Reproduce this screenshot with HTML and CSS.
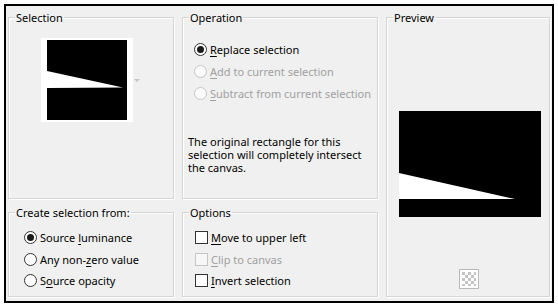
FILE: index.html
```html
<!DOCTYPE html>
<html lang="en">
<head>
<meta charset="utf-8">
<title>Load Selection</title>
<link rel="stylesheet" href="styles.css">
</head>
<body>
<div class="frame">
  <fieldset class="group g-selection">
    <legend>Selection</legend>
    <div class="thumb-row">
      <svg class="thumb" width="92" height="84" viewBox="0 0 92 84">
        <rect x="0" y="0" width="92" height="84" fill="#fff"/>
        <rect x="6" y="2" width="80" height="80" fill="#000"/>
        <polygon points="6,33 82,49.5 6,50" fill="#fff"/>
      </svg>
      <span class="drop-arrow"></span>
    </div>
  </fieldset>

  <fieldset class="group g-operation">
    <legend>Operation</legend>
    <div class="choices">
      <div class="choice"><span class="radio checked"></span><span class="lbl"><u>R</u>eplace selection</span></div>
      <div class="choice disabled"><span class="radio"></span><span class="lbl"><u>A</u>dd to current selection</span></div>
      <div class="choice disabled"><span class="radio"></span><span class="lbl"><u>S</u>ubtract from current selection</span></div>
    </div>
    <p class="note">The original rectangle for this<br>selection will completely intersect<br>the canvas.</p>
  </fieldset>

  <fieldset class="group g-preview">
    <legend>Preview</legend>
    <svg class="preview" width="142" height="106" viewBox="0 0 142 106">
      <rect x="0" y="0" width="142" height="106" fill="#000"/>
      <polygon points="0,62 116,88 0,88" fill="#fff"/>
    </svg>
    <svg class="checker" width="20" height="20" viewBox="0 0 20 20">
      <rect x="0.5" y="0.5" width="19" height="19" fill="#fff" stroke="#b9b9b9"/>
      <rect x="3" y="3" width="3" height="3" fill="#c4c4c4"/>
      <rect x="9" y="3" width="3" height="3" fill="#c4c4c4"/>
      <rect x="15" y="3" width="2" height="3" fill="#c4c4c4"/>
      <rect x="6" y="6" width="3" height="3" fill="#c4c4c4"/>
      <rect x="12" y="6" width="3" height="3" fill="#c4c4c4"/>
      <rect x="3" y="9" width="3" height="3" fill="#c4c4c4"/>
      <rect x="9" y="9" width="3" height="3" fill="#c4c4c4"/>
      <rect x="15" y="9" width="2" height="3" fill="#c4c4c4"/>
      <rect x="6" y="12" width="3" height="3" fill="#c4c4c4"/>
      <rect x="12" y="12" width="3" height="3" fill="#c4c4c4"/>
      <rect x="3" y="15" width="3" height="2" fill="#c4c4c4"/>
      <rect x="9" y="15" width="3" height="2" fill="#c4c4c4"/>
      <rect x="15" y="15" width="2" height="2" fill="#c4c4c4"/>
    </svg>
  </fieldset>

  <fieldset class="group g-source">
    <legend>Create selection from:</legend>
    <div class="choices">
      <div class="choice"><span class="radio checked"></span><span class="lbl">Source <u>l</u>uminance</span></div>
      <div class="choice"><span class="radio"></span><span class="lbl">Any non-<u>z</u>ero value</span></div>
      <div class="choice"><span class="radio"></span><span class="lbl">S<u>o</u>urce opacity</span></div>
    </div>
  </fieldset>

  <fieldset class="group g-options">
    <legend>Options</legend>
    <div class="choices">
      <div class="choice"><span class="check"></span><span class="lbl"><u>M</u>ove to upper left</span></div>
      <div class="choice disabled"><span class="check"></span><span class="lbl"><u>C</u>lip to canvas</span></div>
      <div class="choice"><span class="check"></span><span class="lbl"><u>I</u>nvert selection</span></div>
    </div>
  </fieldset>
</div>
</body>
</html>
```

FILE: styles.css
```css
* { box-sizing: border-box; }

html, body {
  margin: 0;
  padding: 0;
  background: #fff;
}

body {
  font-family: "Noto Sans", "Open Sans", sans-serif;
  font-size: 11px;
  line-height: 15px;
  color: #000;
}

.frame {
  margin: 4px;
  width: 550px;
  height: 299px;
  border: 2px solid #000;
  background: #f0f0f0;
  padding: 4px 2px 4px 2px;
  display: grid;
  grid-template-columns: 166px 196px 164px;
  grid-template-rows: 189px 92px;
  column-gap: 8px;
  row-gap: 6px;
}

.group {
  margin: 0;
  padding: 0;
  min-width: 0;
  border: 1px solid #d5d5d5;
  box-shadow: inset 1px 1px 0 #fff, 1px 1px 0 #fff;
  display: flex;
  flex-direction: column;
  align-items: flex-start;
}

.group legend {
  margin-left: 6px;
  padding: 0 1px;
  line-height: 15px;
  height: 15px;
}

.g-selection { grid-column: 1; grid-row: 1; }
.g-operation { grid-column: 2; grid-row: 1; }
.g-preview   { grid-column: 3; grid-row: 1 / span 2; }
.g-source    { grid-column: 1; grid-row: 2; }
.g-options   { grid-column: 2; grid-row: 2; }

/* Selection thumbnail */
.thumb-row {
  display: flex;
  align-items: center;
  margin: 13px 0 0 32px;
}
.thumb { display: block; }
.drop-arrow {
  margin-left: 1px;
  width: 0;
  height: 0;
  border-left: 3px solid transparent;
  border-right: 3px solid transparent;
  border-top: 3px solid #c4c4c4;
}

/* Choices */
.choices {
  display: flex;
  flex-direction: column;
}
.choice {
  display: flex;
  align-items: center;
  gap: 3px;
  height: 22px;
  white-space: nowrap;
}
.choice u { text-decoration-thickness: 1px; text-underline-offset: 2px; }
.choice.disabled .lbl { color: #a0a0a0; }

.g-operation .choices { margin: 13px 0 0 11px; }
.g-source .choices,
.g-options .choices { margin: 7px 0 0 15px; }
.g-source .choice,
.g-options .choice { height: 21.5px; }
.g-options .choices { margin-left: 12px; }

.radio {
  position: relative;
  flex: none;
  width: 13px;
  height: 13px;
  border-radius: 50%;
  border: 1px solid #333;
  background: #fff;
}
.radio.checked::after {
  content: "";
  position: absolute;
  left: 2px;
  top: 2px;
  width: 7px;
  height: 7px;
  border-radius: 50%;
  background: #1a1a1a;
}
.disabled .radio {
  border-color: #c6c6c6;
  background: #fbfbfb;
}

.check {
  flex: none;
  width: 13px;
  height: 13px;
  border: 1px solid #333;
  background: #fff;
}
.disabled .check {
  border-color: #c6c6c6;
  background: #f7f7f7;
}

.note {
  margin: 31px 0 0 5px;
  line-height: 13px;
  white-space: nowrap;
}

/* Preview */
.preview {
  display: block;
  margin: 86px 0 0 12px;
}
.checker {
  display: block;
  margin: 52px 0 0 72px;
}
```
